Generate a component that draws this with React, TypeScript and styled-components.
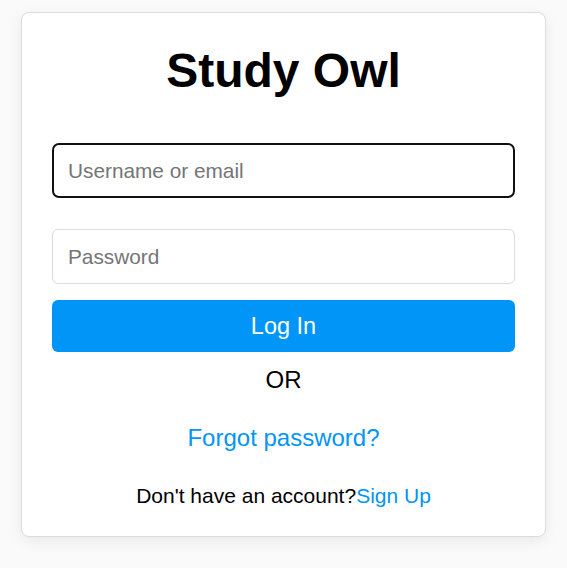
import React from "react";
import styled, { createGlobalStyle } from "styled-components";

const GlobalStyle = createGlobalStyle`
  html, body {
    margin: 0;
    padding: 0;
    background: #fafafa;
    font-family: "Liberation Sans", Arial, sans-serif;
  }
  * { box-sizing: border-box; }
`;

const Page = styled.main`
  display: flex;
  justify-content: center;
  padding: 12px 21px 30px;
`;

const Card = styled.form`
  flex: 1;
  display: flex;
  flex-direction: column;
  align-items: stretch;
  background: #fff;
  border: 1px solid #dcdcdc;
  border-radius: 8px;
  box-shadow: 0 4px 14px rgba(0, 0, 0, 0.07);
  padding: 30px 30px 28px;
`;

const Title = styled.h1`
  margin: 0 0 45px;
  text-align: center;
  font-size: 48px;
  font-weight: 700;
  color: #000;
`;

const Input = styled.input<{ $active?: boolean }>`
  display: block;
  width: 100%;
  height: 55px;
  padding: 0 15px;
  font-family: "Liberation Sans", Arial, sans-serif;
  font-size: 20.8px;
  color: #000;
  background: #fff;
  border: ${(p) => (p.$active ? "2px solid #111" : "1px solid #dbdbdb")};
  border-radius: ${(p) => (p.$active ? "7px" : "6px")};
  padding-left: ${(p) => (p.$active ? "14px" : "15px")};
  outline: none;
  margin-bottom: ${(p) => (p.$active ? "31px" : "16px")};
  &::placeholder { color: #757575; }
`;

const Button = styled.button`
  display: block;
  width: 100%;
  height: 52px;
  border: none;
  border-radius: 6px;
  background: #0095f6;
  color: #fff;
  font-family: "Liberation Sans", Arial, sans-serif;
  font-size: 23.5px;
  cursor: pointer;
`;

const Or = styled.div`
  margin: 14px 0 0;
  text-align: center;
  font-size: 24px;
  color: #000;
`;

const Link = styled.a`
  color: #0095f6;
  text-decoration: none;
`;

const Forgot = styled.div`
  margin-top: 30px;
  text-align: center;
  font-size: 24px;
`;

const Footer = styled.p`
  margin: 32px 0 0;
  text-align: center;
  font-size: 21px;
  color: #000;
`;

export default function App() {
  return (
    <>
      <GlobalStyle />
      <Page>
        <Card onSubmit={(e) => e.preventDefault()}>
          <Title>Study Owl</Title>
          <Input $active type="text" placeholder="Username or email" />
          <Input type="password" placeholder="Password" />
          <Button type="submit">Log In</Button>
          <Or>OR</Or>
          <Forgot>
            <Link href="#">Forgot password?</Link>
          </Forgot>
          <Footer>
            Don't have an account?<Link href="#">Sign Up</Link>
          </Footer>
        </Card>
      </Page>
    </>
  );
}
